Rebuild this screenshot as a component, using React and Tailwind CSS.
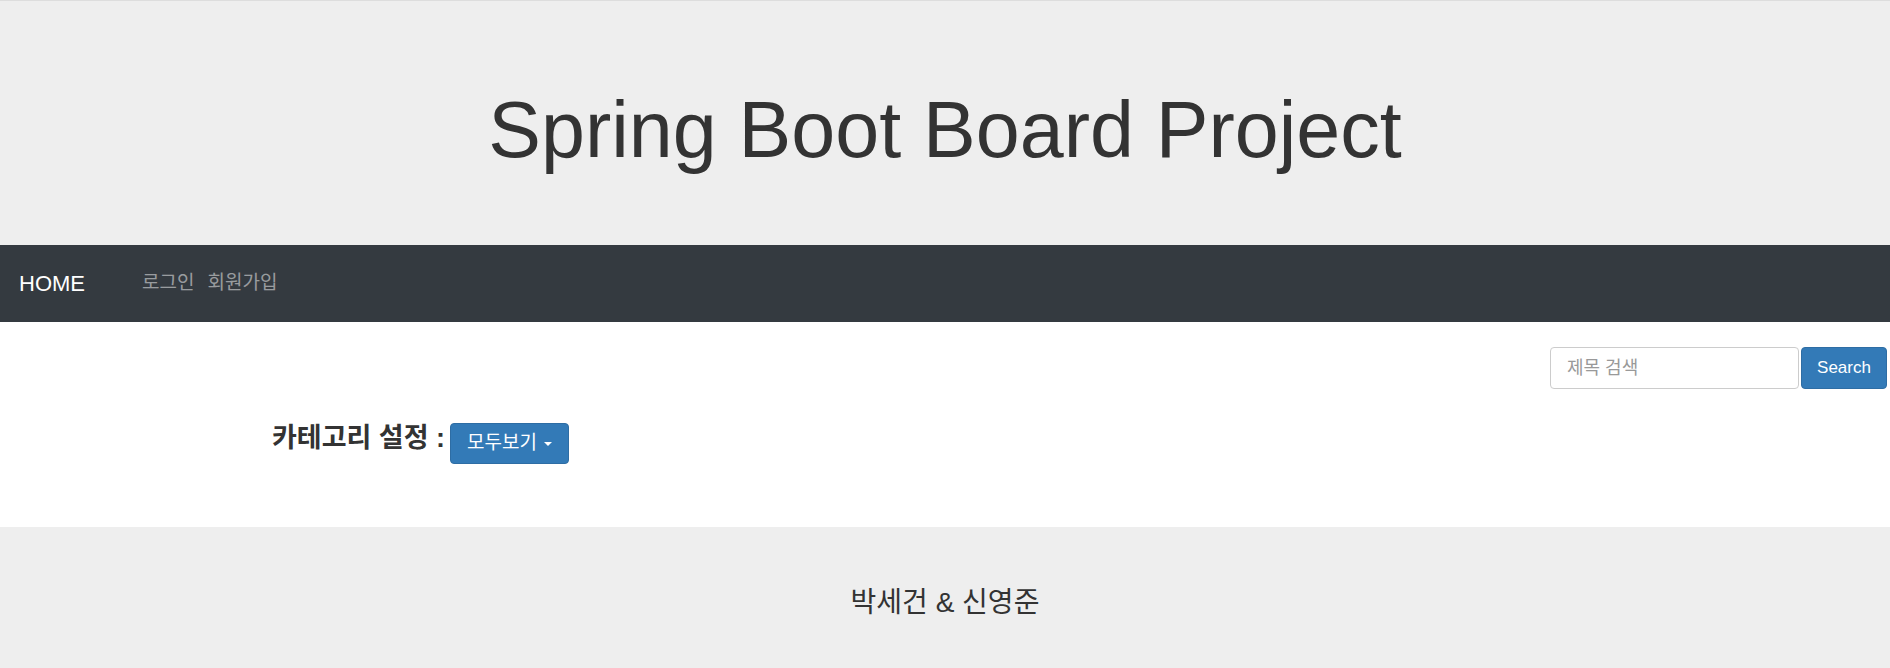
export default function App() {
    const kr = { fontFamily: '"Liberation Sans", "Noto Sans CJK KR", Arial, sans-serif' };

    return (
        <div className="min-h-screen bg-white text-[#333]" style={kr}>
            <header className="h-[245px] border-t border-[#ddd] bg-[#eee] pt-[89px] text-center">
                <h1 className="text-[79px] leading-none font-normal text-[#333]">Spring Boot Board Project</h1>
            </header>

            <nav className="h-[77px] bg-[#343a40] flex items-center pl-[19px]">
                <a href="#" className="text-[22px] text-white">HOME</a>
                <div className="ml-[57px] flex items-center gap-[13px] text-[19px] text-[rgba(255,255,255,0.5)]">
                    <a href="#">로그인</a>
                    <a href="#">회원가입</a>
                </div>
            </nav>

            <main className="h-[205px] bg-white">
                <div className="pt-[25px] pr-[3px] flex justify-end">
                    <input
                        type="text"
                        placeholder="제목 검색"
                        className="w-[249px] h-[42px] rounded border border-[#ccc] px-[16px] text-[18px] placeholder:text-[#999] outline-none"
                    />
                    <button
                        type="button"
                        className="ml-[2px] w-[86px] h-[42px] rounded border border-[#2e6da4] bg-[#337ab7] text-[17px] text-white"
                    >
                        Search
                    </button>
                </div>

                <div className="mt-[34px] pl-[272px] flex items-start">
                    <span className="text-[27px] leading-[30px] font-bold text-[#333]">카테고리 설정 :</span>
                    <button
                        type="button"
                        className="ml-[5px] h-[41px] px-[16px] rounded border border-[#2e6da4] bg-[#337ab7] text-[19px] text-white flex items-center gap-[7px]"
                    >
                        모두보기
                        <span className="w-0 h-0 border-l-[4px] border-r-[4px] border-t-[4px] border-l-transparent border-r-transparent border-t-white" />
                    </button>
                </div>
            </main>

            <footer className="h-[141px] bg-[#eee] flex items-center justify-center pt-[10px]">
                <p className="text-[28px] text-[#333]">박세건 &amp; 신영준</p>
            </footer>
        </div>
    );
}
